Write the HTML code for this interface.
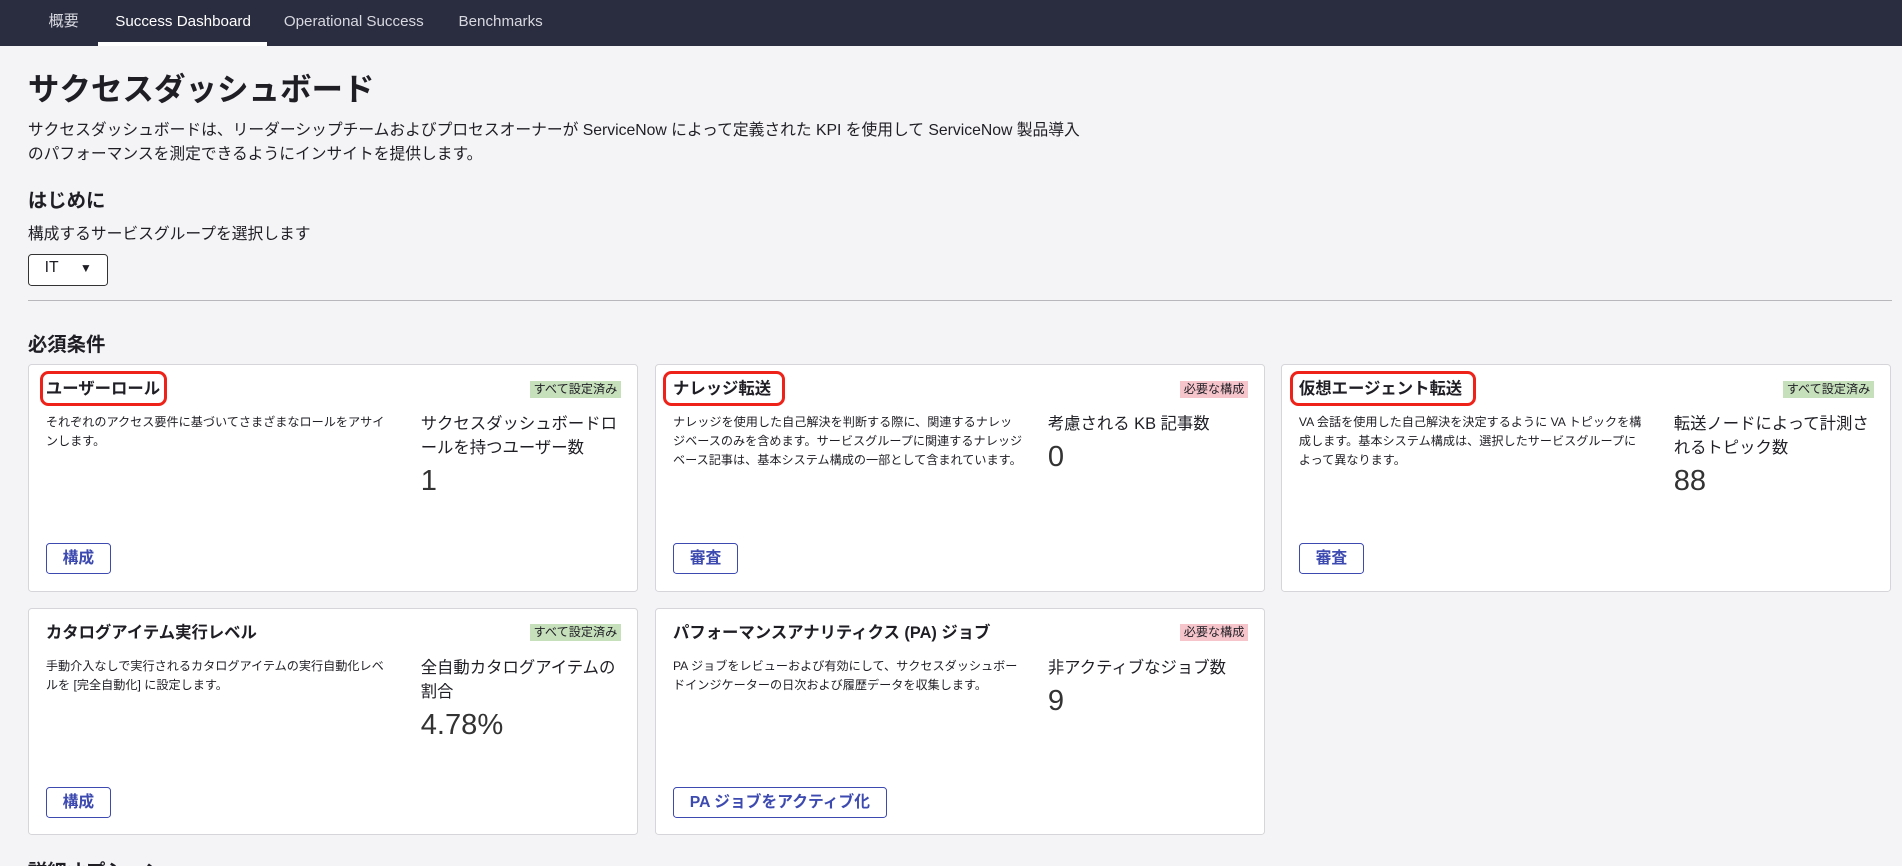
<!DOCTYPE html>
<html><head><meta charset="utf-8"><style>
html,body{margin:0;padding:0;width:1902px;height:866px;overflow:hidden;background:#f4f4f6}
#w{zoom:1.2130;width:1568px;height:714px;position:relative;overflow:hidden;font-family:"Liberation Sans","Noto Sans CJK JP",sans-serif;color:#1e1e24}
.nav{position:absolute;left:0;top:0;width:1568px;height:38px;background:#2a2c40}
.nav span{position:absolute;top:0;line-height:36px;font-size:12.5px;color:#d8d9e0;white-space:nowrap}
.nav .act{color:#fff}
.ul{position:absolute;left:81px;top:35px;width:139px;height:3px;background:#fff}
.a{position:absolute;white-space:nowrap}
h1{position:absolute;left:23px;top:53px;margin:0;font-size:26px;font-weight:bold}
.p{position:absolute;left:23px;top:98px;font-size:13px;line-height:20px}
.h2{position:absolute;font-size:16px;font-weight:bold}
.sel{position:absolute;left:23px;top:209px;width:64px;height:25px;border:1px solid #333;border-radius:3px;background:#fff;font-size:13px}
.hr{position:absolute;left:23px;top:247px;width:1537px;height:1px;background:#b8b8bc}
.card{position:absolute;width:501px;height:186px;background:#fff;border:1px solid #d6d6da;border-radius:3px}
.ct{position:absolute;left:14px;top:10px;font-size:13.5px;line-height:20px;font-weight:bold;white-space:nowrap}
.hl{position:absolute;left:9px;top:5px;height:24px;border:3px solid #ee2218;border-radius:7px}
.bd{position:absolute;right:13px;top:13px;font-size:10px;line-height:14px;padding:0 3px;white-space:nowrap}
.g{background:#c7e0bc}.r{background:#f6c5cb}
.ds{position:absolute;left:14px;top:40px;font-size:10px;line-height:15.5px;white-space:nowrap}
.rt{position:absolute;left:323px;top:40px;font-size:13.5px;line-height:19.5px;white-space:nowrap}
.num{font-size:24px;font-weight:300;line-height:32px;margin-top:1px;color:#333}
.btn{position:absolute;left:14px;top:147px;height:24px;border:1px solid #3d4ab0;border-radius:3px;color:#3d4ab0;font-weight:bold;font-size:13px;line-height:24px;padding:0 13px;white-space:nowrap}
</style></head><body><div id="w">
<div class="nav"><span style="left:40px">概要</span><span class="act" style="left:95px">Success Dashboard</span><span style="left:234px">Operational Success</span><span style="left:378px">Benchmarks</span><div class="ul"></div></div>
<h1>サクセスダッシュボード</h1>
<div class="p">サクセスダッシュボードは、リーダーシップチームおよびプロセスオーナーが ServiceNow によって定義された KPI を使用して ServiceNow 製品導入<br>のパフォーマンスを測定できるようにインサイトを提供します。</div>
<div class="h2" style="left:23px;top:152px">はじめに</div>
<div class="a" style="left:23px;top:182px;font-size:13px">構成するサービスグループを選択します</div>
<div class="sel"><span class="a" style="left:13px;top:4px">IT</span><span class="a" style="left:42px;top:5px;font-size:10px">▼</span></div>
<div class="hr"></div>
<div class="h2" style="left:23px;top:270px">必須条件</div>

<div class="card" style="left:23px;top:300px"><div class="hl" style="width:100px"></div><div class="ct">ユーザーロール</div><div class="bd g">すべて設定済み</div>
<div class="ds">それぞれのアクセス要件に基づいてさまざまなロールをアサイ<br>ンします。</div>
<div class="rt">サクセスダッシュボードロ<br>ールを持つユーザー数<div class="num">1</div></div><div class="btn">構成</div></div>

<div class="card" style="left:540px;top:300px"><div class="hl" style="width:95px;left:6px"></div><div class="ct">ナレッジ転送</div><div class="bd r">必要な構成</div>
<div class="ds">ナレッジを使用した自己解決を判断する際に、関連するナレッ<br>ジベースのみを含めます。サービスグループに関連するナレッジ<br>ベース記事は、基本システム構成の一部として含まれています。</div>
<div class="rt">考慮される KB 記事数<div class="num">0</div></div><div class="btn">審査</div></div>

<div class="card" style="left:1056px;top:300px"><div class="hl" style="width:148px;left:7px"></div><div class="ct">仮想エージェント転送</div><div class="bd g">すべて設定済み</div>
<div class="ds">VA 会話を使用した自己解決を決定するように VA トピックを構<br>成します。基本システム構成は、選択したサービスグループに<br>よって異なります。</div>
<div class="rt">転送ノードによって計測さ<br>れるトピック数<div class="num">88</div></div><div class="btn">審査</div></div>

<div class="card" style="left:23px;top:501px"><div class="ct">カタログアイテム実行レベル</div><div class="bd g">すべて設定済み</div>
<div class="ds">手動介入なしで実行されるカタログアイテムの実行自動化レベ<br>ルを [完全自動化] に設定します。</div>
<div class="rt">全自動カタログアイテムの<br>割合<div class="num">4.78%</div></div><div class="btn">構成</div></div>

<div class="card" style="left:540px;top:501px"><div class="ct">パフォーマンスアナリティクス (PA) ジョブ</div><div class="bd r">必要な構成</div>
<div class="ds">PA ジョブをレビューおよび有効にして、サクセスダッシュボー<br>ドインジケーターの日次および履歴データを収集します。</div>
<div class="rt">非アクティブなジョブ数<div class="num">9</div></div><div class="btn">PA ジョブをアクティブ化</div></div>

<div class="h2" style="left:23px;top:705px">詳細オプション</div>
</div></body></html>
